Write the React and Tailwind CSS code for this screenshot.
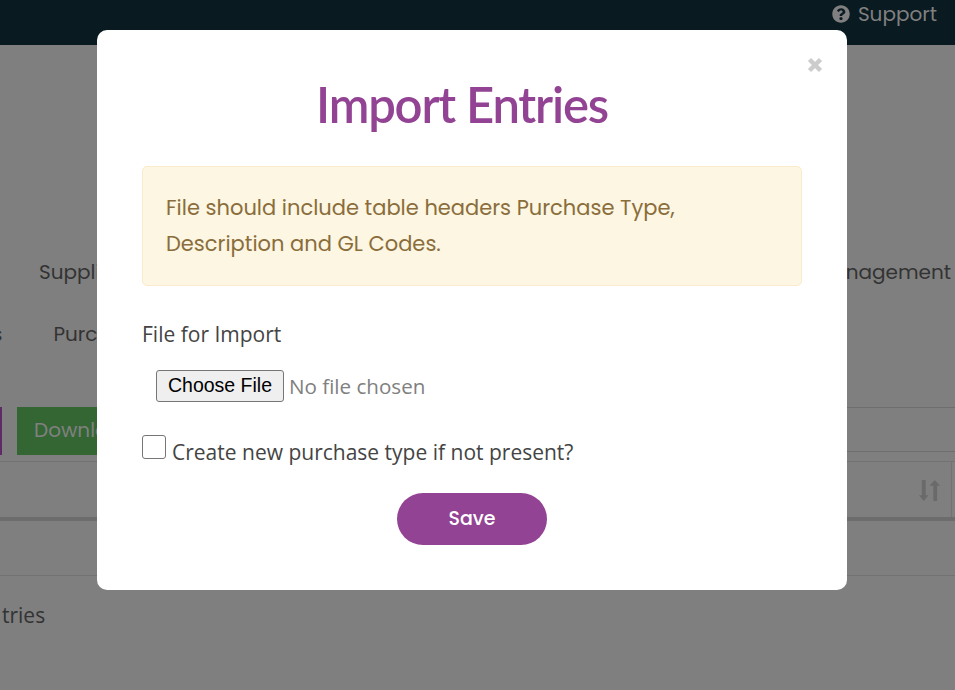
const poppins = "font-['Poppins','Inter',sans-serif]";

function FileInput() {
  return (
    <div className="flex items-center pl-[14px] h-[32px]">
      <button className="h-[32px] w-[128px] bg-[#efefef] border border-[#767676] rounded-[3px] text-[19.5px] text-black font-['Liberation_Sans',sans-serif]">
        Choose File
      </button>
      <span className="ml-[5px] text-[20.6px] text-[#808080] font-['Open_Sans',sans-serif]">No file chosen</span>
    </div>
  );
}

export default function App() {
  return (
    <div className="relative h-[690px] w-[955px] overflow-hidden bg-[#7f7f7f] font-['Open_Sans',sans-serif]">
      {/* top bar */}
      <header className="h-[45px] bg-[#0a1a21] flex items-start justify-end pr-[18px] pt-[1px]">
        <div className={`flex items-center gap-[8px] text-[#808080] text-[20px] leading-[26px] ${poppins}`}>
          <svg viewBox="0 0 512 512" className="w-[18px] h-[18px] fill-[#808080]">
            <path d="M504 256c0 137-111 248-248 248S8 393 8 256 119 8 256 8s248 111 248 248zM262.700 90c-54.500 0-89.300 23-116.500 63.800-3.500 5.300-2.400 12.400 2.700 16.300l34.700 26.300c5.200 3.900 12.600 3 16.700-2.100 17.900-22.700 30.100-35.800 57.300-35.800 20.400 0 45.700 13.100 45.700 32.900 0 15-12.400 22.700-32.500 34-23.500 13.200-54.600 29.600-54.600 70.600V300c0 6.600 5.400 12 12 12h56c6.600 0 12-5.400 12-12v-1.300c0-28.400 83-29.600 83-106.700 0-58-60.200-102-116.500-102zM256 338c-25.400 0-46 20.600-46 46 0 25.400 20.600 46 46 46s46-20.600 46-46c0-25.400-20.600-46-46-46z" />
          </svg>
          <span>Support</span>
        </div>
      </header>

      {/* page behind the dialog */}
      <main className="text-[#333333]">
        <div className={`h-[240px] flex items-end justify-between pl-[39px] pr-[4px] text-[20px] leading-[26px] ${poppins}`}>
          <span>Suppliers</span>
          <span>Management</span>
        </div>
        <div className={`mt-[36px] h-[26px] flex text-[20px] leading-[26px] -ml-[13px] gap-[51px] ${poppins}`}>
          <span>Is</span>
          <span>Purchase</span>
        </div>
        <div className="mt-[60px] h-[54px] flex items-start">
          <div className="h-[48px] w-[2px] bg-[#5f2a66]" />
          <div className={`ml-[15px] h-[48px] w-[140px] bg-[#336633] text-[#808080] text-[20px] leading-[46px] pl-[17px] ${poppins}`}>
            Download
          </div>
          <div className="flex-1 h-[45px] border-y border-[#6e6e6e]" />
        </div>
        <div className="h-[60px] border-t border-[#727272] border-b-[4px] border-b-[#6c6c6c] pr-[3px] flex justify-end">
          <div className="border-r border-[#727272] pr-[11px] pt-[17px]">
            <svg viewBox="0 0 22 24" className="w-[21px] h-[23px] fill-[#6a6a6a]">
              <path d="M3 1h4v16h3l-5 6-5-6h3z" />
              <path d="M15 23h4V7h3l-5.500-6-5.500 6h4z" />
            </svg>
          </div>
        </div>
        <div className="h-[55px] border-b border-[#727272]" />
        <div className="mt-[26px] pl-[2px] text-[21px] leading-[26px]">tries</div>
      </main>

      {/* dialog */}
      <div className="absolute left-[97px] top-[30px] w-[750px] h-[560px] bg-white rounded-[10px] px-[45px]">
        <svg viewBox="0 0 16 16" className="absolute left-[710px] top-[27px] w-[16px] h-[16px]">
          <path d="M2.500 2.500l11 11M13.500 2.500l-11 11" stroke="#cccccc" strokeWidth="4.500" />
        </svg>
        <h2 className="pt-[44px] h-[136px] pr-[20px] text-center text-[49px] leading-[60px] font-semibold tracking-[-1.2px] text-[#934393] font-['Lato',sans-serif]">
          Import Entries
        </h2>
        <div className={`h-[120px] border border-[#faebcc] rounded-[5px] bg-[#fcf6e2] px-[23px] pt-[23px] text-[21px] leading-[36px] text-[#8a6d3b] ${poppins}`}>
          File should include table headers Purchase Type,<br />Description and GL Codes.
        </div>
        <label className="block mt-[34px] text-[21px] leading-[28px] text-[#444444]">File for Import</label>
        <div className="mt-[22px]">
          <FileInput />
        </div>
        <div className="mt-[33px] flex items-start">
          <span className="w-[24px] h-[24px] border border-[#767676] rounded-[3px] bg-white" />
          <span className="ml-[6px] mt-[3px] text-[21px] leading-[28px] text-[#444444]">Create new purchase type if not present?</span>
        </div>
        <div className="mt-[27px] flex justify-center">
          <button className={`w-[150px] h-[52px] rounded-full bg-[#934393] text-white text-[19px] font-medium ${poppins}`}>
            Save
          </button>
        </div>
      </div>
    </div>
  );
}
